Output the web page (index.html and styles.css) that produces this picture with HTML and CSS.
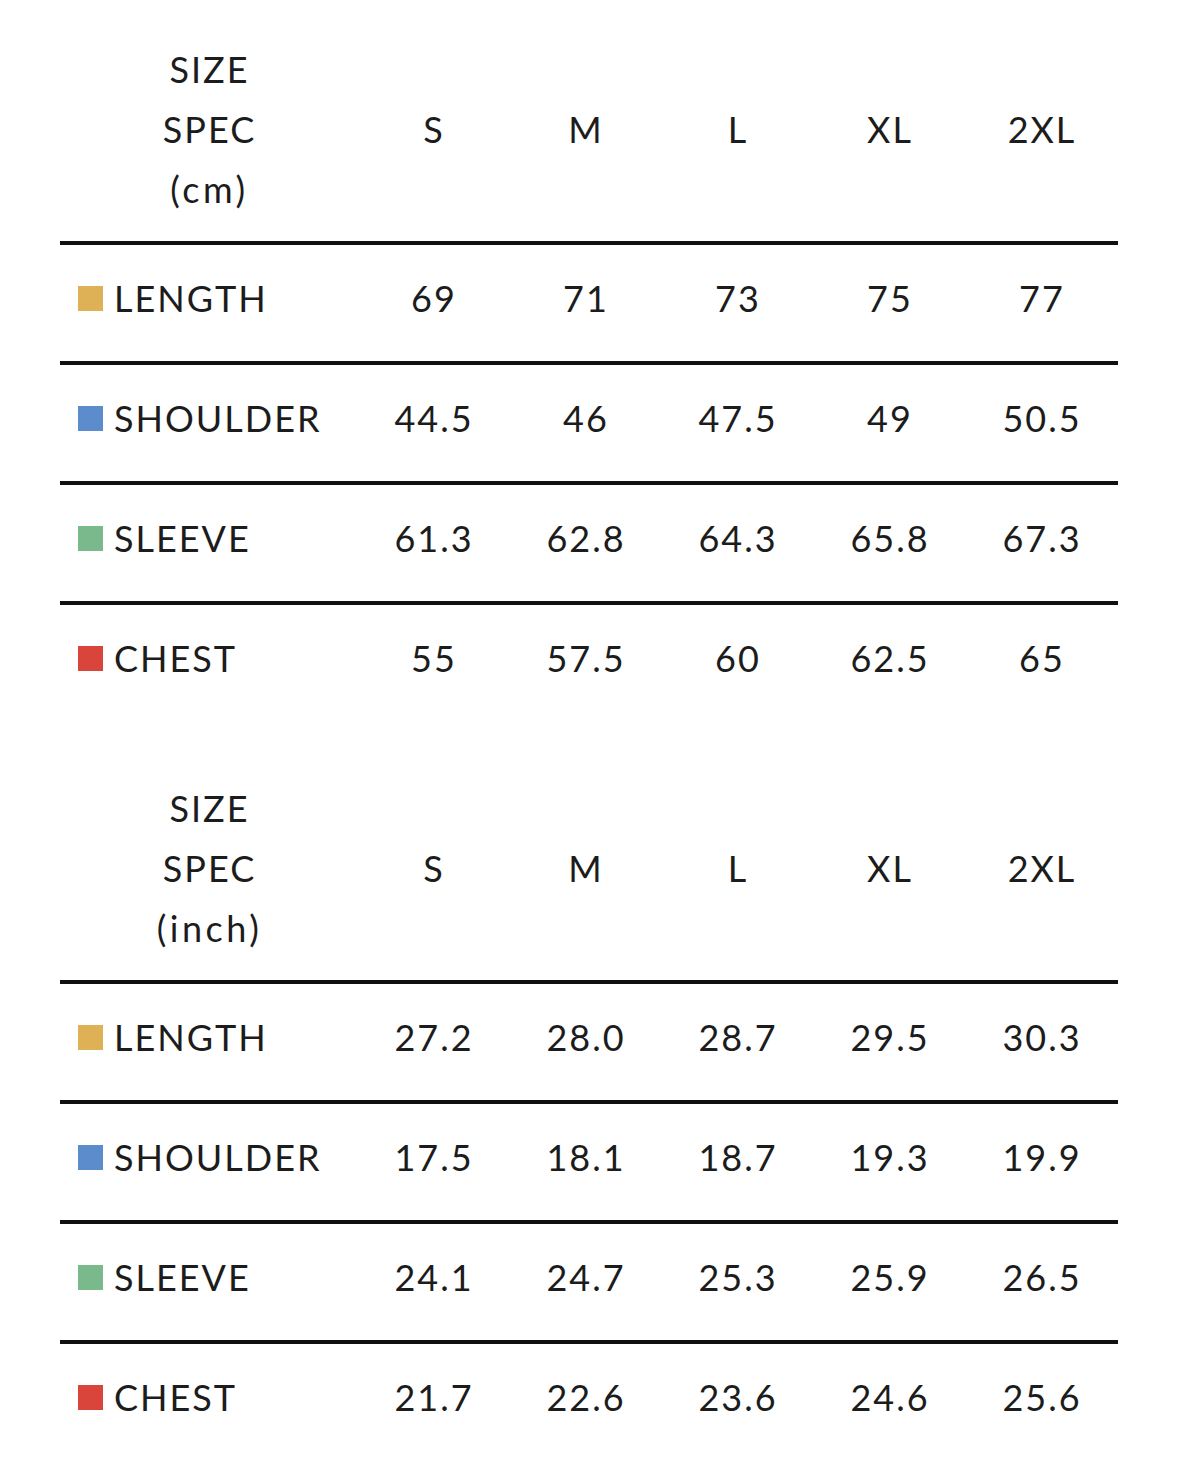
FILE: index.html
```html
<!DOCTYPE html>
<html>
<head>
<meta charset="utf-8">
<link rel="stylesheet" href="styles.css">
<title>Size Spec</title>
</head>
<body>
<main class="page">
  <section class="chart">
    <div class="head">
      <div class="head-label"><span>SIZE</span><span>SPEC</span><span class="unit">(cm)</span></div>
      <div class="cell">S</div><div class="cell">M</div><div class="cell">L</div><div class="cell">XL</div><div class="cell">2XL</div>
    </div>
    <div class="row">
      <div class="label"><i class="sw sw-length"></i>LENGTH</div>
      <div class="cell">69</div><div class="cell">71</div><div class="cell">73</div><div class="cell">75</div><div class="cell">77</div>
    </div>
    <div class="row">
      <div class="label"><i class="sw sw-shoulder"></i>SHOULDER</div>
      <div class="cell">44.5</div><div class="cell">46</div><div class="cell">47.5</div><div class="cell">49</div><div class="cell">50.5</div>
    </div>
    <div class="row">
      <div class="label"><i class="sw sw-sleeve"></i>SLEEVE</div>
      <div class="cell">61.3</div><div class="cell">62.8</div><div class="cell">64.3</div><div class="cell">65.8</div><div class="cell">67.3</div>
    </div>
    <div class="row">
      <div class="label"><i class="sw sw-chest"></i>CHEST</div>
      <div class="cell">55</div><div class="cell">57.5</div><div class="cell">60</div><div class="cell">62.5</div><div class="cell">65</div>
    </div>
  </section>
  <section class="chart">
    <div class="head">
      <div class="head-label"><span>SIZE</span><span>SPEC</span><span class="unit">(inch)</span></div>
      <div class="cell">S</div><div class="cell">M</div><div class="cell">L</div><div class="cell">XL</div><div class="cell">2XL</div>
    </div>
    <div class="row">
      <div class="label"><i class="sw sw-length"></i>LENGTH</div>
      <div class="cell">27.2</div><div class="cell">28.0</div><div class="cell">28.7</div><div class="cell">29.5</div><div class="cell">30.3</div>
    </div>
    <div class="row">
      <div class="label"><i class="sw sw-shoulder"></i>SHOULDER</div>
      <div class="cell">17.5</div><div class="cell">18.1</div><div class="cell">18.7</div><div class="cell">19.3</div><div class="cell">19.9</div>
    </div>
    <div class="row">
      <div class="label"><i class="sw sw-sleeve"></i>SLEEVE</div>
      <div class="cell">24.1</div><div class="cell">24.7</div><div class="cell">25.3</div><div class="cell">25.9</div><div class="cell">26.5</div>
    </div>
    <div class="row">
      <div class="label"><i class="sw sw-chest"></i>CHEST</div>
      <div class="cell">21.7</div><div class="cell">22.6</div><div class="cell">23.6</div><div class="cell">24.6</div><div class="cell">25.6</div>
    </div>
  </section>
</main>
</body>
</html>
```

FILE: styles.css
```css
html, body {
  margin: 0;
  padding: 0;
  background: #ffffff;
}

.page {
  width: 1058px;
  margin-left: 60px;
  font-family: "Lato", "Noto Sans", sans-serif;
  font-size: 36px;
  color: #1c1c1c;
  letter-spacing: 2px;
}

.chart + .chart {
  margin-top: 18px;
}

.head,
.row {
  display: grid;
  grid-template-columns: 297px repeat(5, 152px);
}

.head {
  padding: 39px 0 22px;
  align-items: center;
}

.head-label {
  display: flex;
  flex-direction: column;
  align-items: center;
  line-height: 60px;
  padding-left: 2px;
}

.unit {
  letter-spacing: 3.5px;
}

.row {
  border-top: 4px solid #111111;
  height: 116px;
  line-height: 106px;
}

.cell {
  text-align: center;
  padding-left: 2px;
}

.label {
  display: flex;
  align-items: center;
  height: 106px;
  padding-left: 18px;
}

.sw {
  display: block;
  width: 25px;
  height: 25px;
  margin-right: 11px;
  flex: none;
}

.sw-length { background: #dfb156; }
.sw-shoulder { background: #5c8ccc; }
.sw-sleeve { background: #79b98b; }
.sw-chest { background: #d9453a; }
```
